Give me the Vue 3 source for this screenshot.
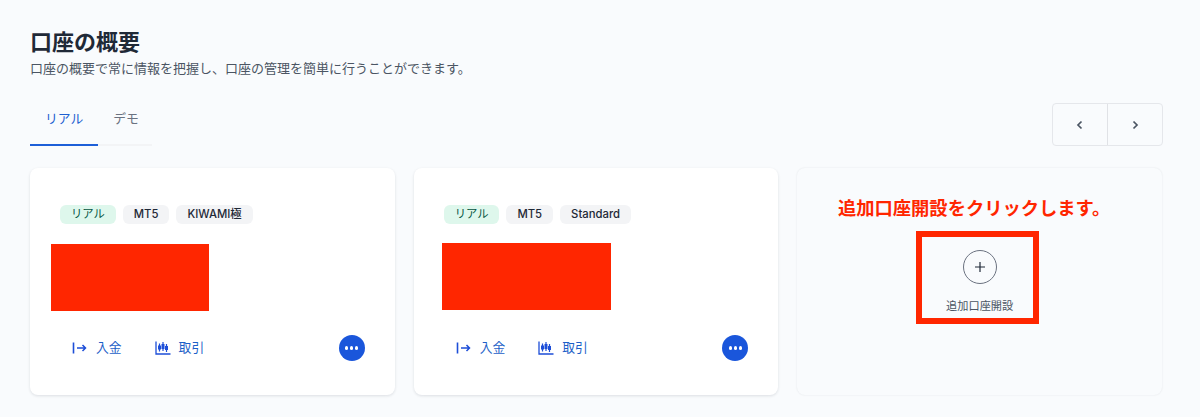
<script setup>
const cards = [
  { tags: ['MT5', 'KIWAMI極'], redClass: 'red-a' },
  { tags: ['MT5', 'Standard'], redClass: 'red-b' },
]
</script>

<template>
  <main class="page">
    <h1 class="title">口座の概要</h1>
    <p class="sub">口座の概要で常に情報を把握し、口座の管理を簡単に行うことができます。</p>

    <div class="toolbar">
      <div class="tabs">
        <button class="tab active">リアル</button>
        <button class="tab">デモ</button>
      </div>
      <div class="pager">
        <button class="page-btn" aria-label="前へ">
          <svg width="10" height="10" viewBox="0 0 10 10"><path d="M6.5 1.5 3 5l3.5 3.5" fill="none" stroke="#4b5563" stroke-width="1.7"/></svg>
        </button>
        <button class="page-btn" aria-label="次へ">
          <svg width="10" height="10" viewBox="0 0 10 10"><path d="M3.5 1.5 7 5 3.5 8.5" fill="none" stroke="#4b5563" stroke-width="1.7"/></svg>
        </button>
      </div>
    </div>

    <section class="grid">
      <article v-for="c in cards" :key="c.tags[1]" class="card">
        <div class="tags">
          <span class="tag real">リアル</span>
          <span v-for="t in c.tags" :key="t" class="tag">{{ t }}</span>
        </div>
        <div class="red" :class="c.redClass"></div>
        <div class="actions">
          <a class="act">
            <svg width="16" height="14" viewBox="0 0 16 14" fill="none" stroke="#1d4ed8" stroke-width="1.5">
              <path d="M1.5 1.5v11" stroke-width="1.6"/>
              <path d="M5 7h8.5M10.5 4l3 3-3 3"/>
            </svg>
            入金
          </a>
          <a class="act">
            <svg width="16" height="14" viewBox="0 0 16 14" fill="none" stroke="#1d4ed8" stroke-width="1.2">
              <path d="M1 .5v12.5h14.5" stroke-width="1.3"/>
              <path d="M4.5 2.5v8M8 1v9M11.5 3v8"/>
              <path d="M4.5 4.5v4M8 3v5M11.5 5v4" stroke-width="3"/>
            </svg>
            取引
          </a>
          <button class="more" aria-label="その他"><i></i><i></i><i></i></button>
        </div>
      </article>

      <article class="card add">
        <p class="note">追加口座開設をクリックします。</p>
        <div class="add-box">
          <span class="plus">
            <svg width="12" height="12" viewBox="0 0 12 12"><path d="M6 1v10M1 6h10" stroke="#1f2937" stroke-width="1.2"/></svg>
          </span>
          <span class="add-label">追加口座開設</span>
        </div>
      </article>
    </section>
  </main>
</template>

<style>
html, body { margin: 0; background: #f9fbfd; }
</style>

<style scoped>
.page {
  height: 417px;
  box-sizing: border-box;
  padding: 29px 38px 0 30px;
  background: #f9fbfd;
  font-family: Inter, "Noto Sans CJK JP", sans-serif;
  overflow: hidden;
}
.title {
  margin: 0;
  font-size: 22px;
  line-height: 26px;
  font-weight: 700;
  color: #1f2937;
}
.sub {
  margin: 4px 0 0;
  font-size: 13px;
  line-height: 18px;
  color: #4b5563;
}
.toolbar {
  display: flex;
  justify-content: space-between;
  align-items: flex-end;
  margin-top: 26px;
  height: 43px;
  margin-right: -1px;
}
.tabs {
  display: flex;
  width: 122px;
  border-bottom: 2px solid #f3f4f6;
}
.tab {
  all: unset;
  height: 41px;
  margin-bottom: -2px;
  box-sizing: border-box;
  padding: 0 15px 11px;
  font-size: 12.8px;
  line-height: 18px;
  color: #6b7280;
  white-space: nowrap;
  flex: none;
  border-bottom: 2px solid transparent;
}
.tab.active {
  color: #1d5fd0;
  border-bottom-color: #1d5fd8;
}
.pager {
  display: flex;
  width: 111px;
  height: 43px;
  box-sizing: border-box;
  border: 1px solid #e5e7eb;
  border-radius: 4px;
}
.page-btn {
  all: unset;
  flex: 1;
  display: flex;
  align-items: center;
  justify-content: center;
}
.page-btn + .page-btn {
  border-left: 1.5px solid #e0e2e6;
}
.grid {
  display: grid;
  grid-template-columns: repeat(3, 1fr);
  column-gap: 19px;
  margin-top: 22px;
}
.card {
  height: 227px;
  box-sizing: border-box;
  background: #fff;
  border-radius: 8px;
  box-shadow: 0 1px 3px rgba(17, 24, 39, 0.12);
  padding: 37px 30px 0;
}
.tags {
  display: flex;
  gap: 7px;
}
.tag {
  height: 19px;
  padding: 0 11px;
  border-radius: 6px;
  background: #f3f4f6;
  color: #1f2937;
  font-size: 11.3px;
  line-height: 19px;
  font-weight: 500;
}
.tag.real {
  background: #def7ec;
  color: #03543f;
  font-weight: 400;
}
.red {
  background: #ff2600;
}
.red-a {
  width: 158px;
  height: 67px;
  margin: 20px 0 0 -9px;
}
.red-b {
  width: 169px;
  height: 67px;
  margin: 19px 0 0 -2px;
}
.actions {
  display: flex;
  align-items: center;
  gap: 33px;
  margin-top: 24px;
  height: 26px;
  padding-left: 12px;
}
.card:nth-child(2) .actions {
  margin-top: 25px;
}
.act {
  display: flex;
  align-items: center;
  gap: 8px;
  color: #1d5fc8;
  font-size: 12.8px;
  line-height: 18px;
}
.more {
  all: unset;
  margin-left: auto;
  width: 26px;
  height: 26px;
  border-radius: 50%;
  background: #1a56db;
  display: flex;
  align-items: center;
  justify-content: center;
  gap: 1.5px;
}
.more i {
  width: 3.5px;
  height: 3.5px;
  border-radius: 50%;
  background: #fff;
}
.add {
  background: #f9fbfd;
  box-shadow: 0 0 2px rgba(17, 24, 39, 0.1);
  padding: 28px 0 0;
  display: flex;
  flex-direction: column;
  align-items: center;
}
.note {
  margin: 0 11px 0 0;
  font-size: 18.3px;
  line-height: 25px;
  font-weight: 700;
  color: #ff2600;
  white-space: nowrap;
}
.add-box {
  margin: 10px 5px 0 0;
  width: 123px;
  height: 93px;
  box-sizing: border-box;
  border: 6px solid #ff2600;
  padding: 13px 0 0 5px;
  display: flex;
  flex-direction: column;
  align-items: center;
}
.plus {
  width: 34px;
  height: 34px;
  box-sizing: border-box;
  border: 1px solid #6b7280;
  border-radius: 50%;
  display: flex;
  align-items: center;
  justify-content: center;
}
.add-label {
  margin-top: 14px;
  font-size: 11.2px;
  line-height: 16px;
  color: #4b5563;
}
</style>
